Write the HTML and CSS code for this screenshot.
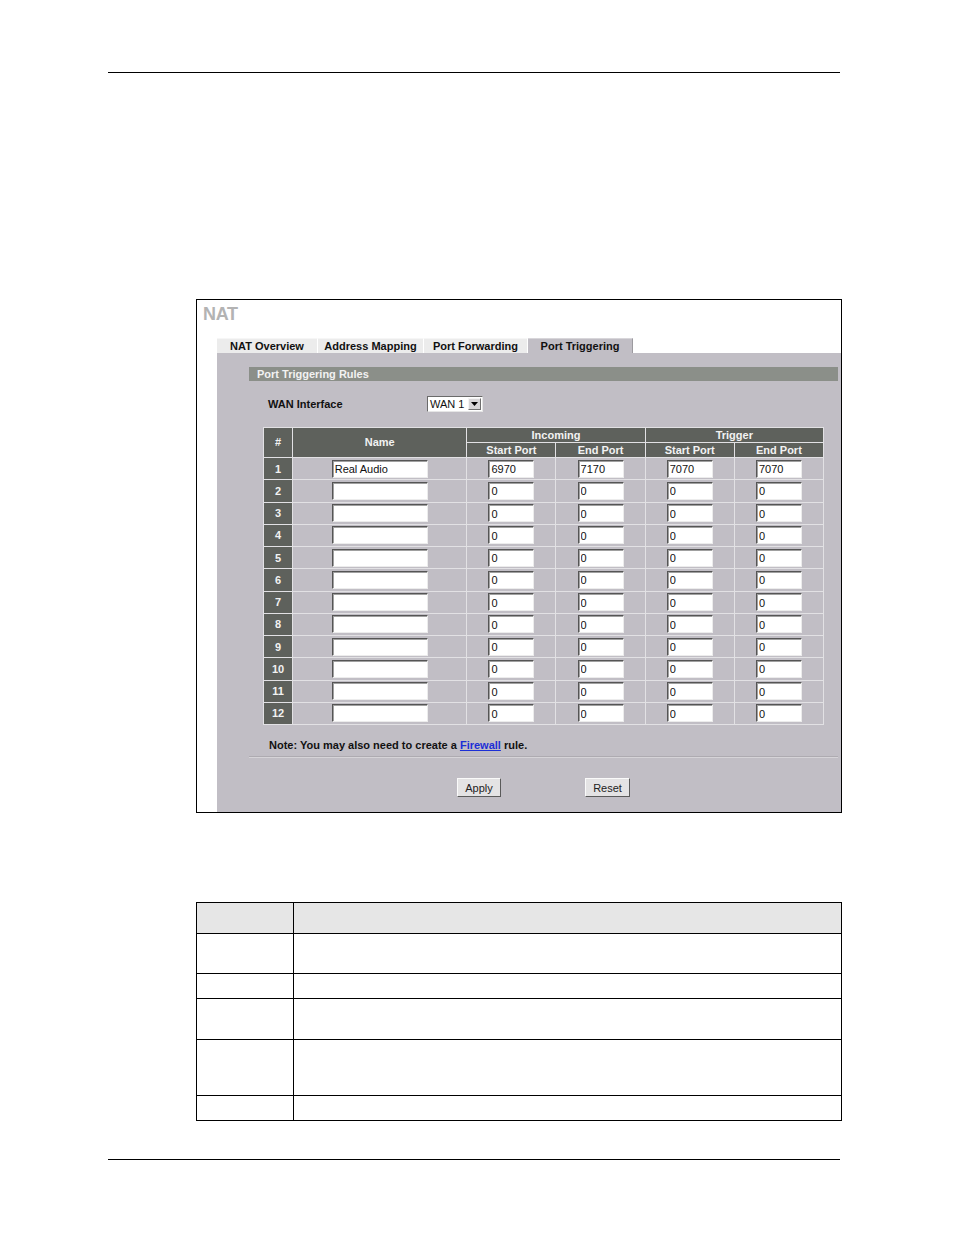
FILE: index.html
```html
<!DOCTYPE html>
<html>
<head>
<meta charset="utf-8">
<title>NAT - Port Triggering</title>
<link rel="stylesheet" href="styles.css">
</head>
<body>
<div class="doc">
  <div class="rule top-rule"></div>

  <div class="frame">
    <div class="frame-title">NAT</div>
    <div class="tabs">
      <div class="tab t1">NAT Overview</div>
      <div class="tab t2">Address Mapping</div>
      <div class="tab t3">Port Forwarding</div>
      <div class="tab t4 active">Port Triggering</div>
    </div>
    <div class="panel">
      <div class="section-bar">Port Triggering Rules</div>
      <div class="wan-row">
        <div class="wan-label">WAN Interface</div>
        <div class="select">
          <span class="select-val">WAN 1</span>
          <span class="select-btn"><svg width="7" height="4" viewBox="0 0 7 4"><path d="M0 0h7L3.5 4z" fill="#000"/></svg></span>
        </div>
      </div>

      <table class="rules">
        <colgroup>
          <col class="c-num"><col class="c-name"><col class="c-port"><col class="c-port"><col class="c-port"><col class="c-port">
        </colgroup>
        <thead>
          <tr class="h1">
            <th rowspan="2">#</th>
            <th rowspan="2">Name</th>
            <th colspan="2">Incoming</th>
            <th colspan="2">Trigger</th>
          </tr>
          <tr class="h2">
            <th>Start Port</th><th>End Port</th><th>Start Port</th><th>End Port</th>
          </tr>
        </thead>
        <tbody>
          <tr><td class="num">1</td><td><input class="in-name" value="Real Audio"></td><td><input class="in-port" value="6970"></td><td><input class="in-port" value="7170"></td><td><input class="in-port" value="7070"></td><td><input class="in-port" value="7070"></td></tr>
          <tr><td class="num">2</td><td><input class="in-name" value=""></td><td><input class="in-port" value="0"></td><td><input class="in-port" value="0"></td><td><input class="in-port" value="0"></td><td><input class="in-port" value="0"></td></tr>
          <tr><td class="num">3</td><td><input class="in-name" value=""></td><td><input class="in-port" value="0"></td><td><input class="in-port" value="0"></td><td><input class="in-port" value="0"></td><td><input class="in-port" value="0"></td></tr>
          <tr><td class="num">4</td><td><input class="in-name" value=""></td><td><input class="in-port" value="0"></td><td><input class="in-port" value="0"></td><td><input class="in-port" value="0"></td><td><input class="in-port" value="0"></td></tr>
          <tr><td class="num">5</td><td><input class="in-name" value=""></td><td><input class="in-port" value="0"></td><td><input class="in-port" value="0"></td><td><input class="in-port" value="0"></td><td><input class="in-port" value="0"></td></tr>
          <tr><td class="num">6</td><td><input class="in-name" value=""></td><td><input class="in-port" value="0"></td><td><input class="in-port" value="0"></td><td><input class="in-port" value="0"></td><td><input class="in-port" value="0"></td></tr>
          <tr><td class="num">7</td><td><input class="in-name" value=""></td><td><input class="in-port" value="0"></td><td><input class="in-port" value="0"></td><td><input class="in-port" value="0"></td><td><input class="in-port" value="0"></td></tr>
          <tr><td class="num">8</td><td><input class="in-name" value=""></td><td><input class="in-port" value="0"></td><td><input class="in-port" value="0"></td><td><input class="in-port" value="0"></td><td><input class="in-port" value="0"></td></tr>
          <tr><td class="num">9</td><td><input class="in-name" value=""></td><td><input class="in-port" value="0"></td><td><input class="in-port" value="0"></td><td><input class="in-port" value="0"></td><td><input class="in-port" value="0"></td></tr>
          <tr><td class="num">10</td><td><input class="in-name" value=""></td><td><input class="in-port" value="0"></td><td><input class="in-port" value="0"></td><td><input class="in-port" value="0"></td><td><input class="in-port" value="0"></td></tr>
          <tr><td class="num">11</td><td><input class="in-name" value=""></td><td><input class="in-port" value="0"></td><td><input class="in-port" value="0"></td><td><input class="in-port" value="0"></td><td><input class="in-port" value="0"></td></tr>
          <tr><td class="num">12</td><td><input class="in-name" value=""></td><td><input class="in-port" value="0"></td><td><input class="in-port" value="0"></td><td><input class="in-port" value="0"></td><td><input class="in-port" value="0"></td></tr>
        </tbody>
      </table>

      <div class="note">Note: You may also need to create a <a href="#" class="fw-link">Firewall</a> rule.</div>
      <div class="sep"></div>
      <div class="buttons">
        <button class="btn btn-apply">Apply</button>
        <button class="btn btn-reset">Reset</button>
      </div>
    </div>
  </div>

  <table class="desc">
    <tr class="desc-head"><td class="d1"></td><td></td></tr>
    <tr class="r1"><td class="d1"></td><td></td></tr>
    <tr class="r2"><td class="d1"></td><td></td></tr>
    <tr class="r3"><td class="d1"></td><td></td></tr>
    <tr class="r4"><td class="d1"></td><td></td></tr>
    <tr class="r5"><td class="d1"></td><td></td></tr>
  </table>

  <div class="rule bottom-rule"></div>
</div>
</body>
</html>
```

FILE: styles.css
```css
html, body {
  margin: 0;
  padding: 0;
  background: #fff;
}

.doc {
  width: 954px;
  height: 1235px;
  overflow: hidden;
  font-family: "Liberation Sans", Arial, sans-serif;
}

.rule {
  height: 1px;
  background: #000;
  width: 732px;
  margin-left: 108px;
}

.top-rule {
  margin-top: 72px;
}

.bottom-rule {
  margin-top: 38px;
}

/* screenshot frame */
.frame {
  margin-top: 226px;
  margin-left: 196px;
  width: 646px;
  height: 514px;
  border: 1px solid #000;
  box-sizing: border-box;
  background: #fff;
  display: flex;
  flex-direction: column;
}

.frame-title {
  height: 38px;
  padding-left: 6px;
  font-size: 18px;
  font-weight: bold;
  line-height: 28px;
  color: #b3b3b3;
  letter-spacing: -0.3px;
}

.tabs {
  display: flex;
  height: 15px;
  margin-left: 20px;
}

.tab {
  height: 15px;
  box-sizing: border-box;
  background: #ececec;
  border-top: 1px solid #f6f6f6;
  border-right: 1px solid #fff;
  font-size: 11px;
  font-weight: bold;
  line-height: 14px;
  color: #111;
  text-align: center;
  white-space: nowrap;
}

.t1 { width: 101px; }
.t2 { width: 106px; }
.t3 { width: 104px; }
.t4 { width: 105px; }

.tab.active {
  background: #c1bec5;
  border-right: 1px solid #9c9a9f;
  border-top: 1px solid #d8d6da;
}

.panel {
  flex: 1;
  margin-left: 20px;
  background: #c1bec5;
  display: flex;
  flex-direction: column;
}

.section-bar {
  margin: 14px 3px 0 32px;
  height: 14px;
  background: #8b8f89;
  color: #f2f2f2;
  font-size: 11px;
  font-weight: bold;
  line-height: 14px;
  padding-left: 8px;
}

.wan-row {
  display: flex;
  align-items: center;
  margin-top: 15px;
  height: 16px;
  padding-left: 51px;
}

.wan-label {
  width: 159px;
  font-size: 11px;
  font-weight: bold;
  color: #111;
}

.select {
  display: flex;
  width: 56px;
  height: 16px;
  box-sizing: border-box;
  background: #fff;
  border: 1px solid;
  border-color: #6a6a6a #e6e6e6 #e6e6e6 #6a6a6a;
}

.select-val {
  flex: 1;
  font-size: 11px;
  line-height: 14px;
  padding-left: 2px;
  color: #111;
}

.select-btn {
  width: 13px;
  height: 12px;
  margin: 1px 1px 0 0;
  box-sizing: border-box;
  background: #d8d6d8;
  border: 1px solid;
  border-color: #f4f4f4 #6f6f6f #6f6f6f #f4f4f4;
  display: flex;
  align-items: center;
  justify-content: center;
}

/* rules table */
.rules {
  margin-top: 15px;
  margin-left: 46px;
  width: 561px;
  border-collapse: collapse;
  table-layout: fixed;
  border: 1px solid #e2e1e4;
}

.c-num { width: 29px; }
.c-name { width: 174px; }
.c-port { width: 89px; }

.rules th {
  background: #5e615c;
  color: #f2f2f2;
  font-size: 11px;
  font-weight: bold;
  border: 1px solid #e2e1e4;
  padding: 0;
  height: 14px;
  line-height: 13px;
  text-align: center;
}

.rules td {
  border: 1px solid #e2e1e4;
  padding: 0;
  height: 21.25px;
  text-align: center;
  background: #c1bec5;
}

.rules td.num {
  background: #5e615c;
  color: #f2f2f2;
  font-size: 11px;
  font-weight: bold;
}

.rules input {
  display: block;
  margin: 0 auto;
  height: 18px;
  box-sizing: border-box;
  border: 1px solid;
  border-color: #555 #ececec #ececec #555;
  box-shadow: inset 1px 1px 0 #a0a0a0;
  background: #fff;
  font-family: "Liberation Sans", Arial, sans-serif;
  font-size: 11px;
  color: #111;
  padding: 1px 0 0 2px;
  outline: none;
}

.in-name { width: 96px; }
.in-port { width: 46px; }

.note {
  margin-top: 13px;
  padding-left: 52px;
  font-size: 11px;
  font-weight: bold;
  line-height: 14px;
  color: #111;
}

.fw-link {
  color: #1c2fd6;
  text-decoration: underline;
}

.sep {
  margin: 4px 3px 0 32px;
  height: 1px;
  border-top: 1px solid #aeabb1;
  background: #d6d4d8;
}

.buttons {
  display: flex;
  margin-top: 20px;
  padding-left: 240px;
  gap: 84px;
}

.btn {
  height: 19px;
  box-sizing: border-box;
  padding: 0;
  background: #e4e3e4;
  border: 1px solid;
  border-color: #fafafa #5a5a5a #5a5a5a #fafafa;
  font-family: "Liberation Sans", Arial, sans-serif;
  font-size: 11px;
  color: #222;
}

.btn-apply { width: 44px; }
.btn-reset { width: 45px; }

/* description table */
.desc {
  margin-top: 89px;
  margin-left: 196px;
  width: 646px;
  border-collapse: collapse;
  table-layout: fixed;
}

.desc td {
  border: 1px solid #000;
  padding: 0;
}

.desc td.d1 {
  width: 96px;
}

.desc-head td {
  background: #e6e6e6;
  height: 30px;
}

.r1 td { height: 39px; }
.r2 td { height: 24px; }
.r3 td { height: 40px; }
.r4 td { height: 55px; }
.r5 td { height: 24px; }
```
